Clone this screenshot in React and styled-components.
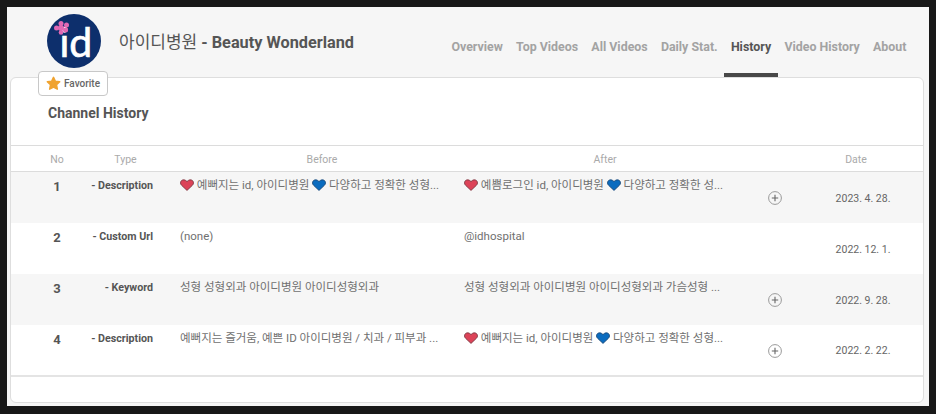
import React from 'react';
import styled, { createGlobalStyle } from 'styled-components';

const GlobalStyle = createGlobalStyle`
  html, body {
    margin: 0;
    height: 100%;
    background: #181818;
    overflow: hidden;
  }
  body {
    font-family: Roboto, "Noto Sans CJK KR", sans-serif;
  }
`;

const COLUMNS = '82px 87px 284px 282px 57px 1fr';

const navItems = ['Overview', 'Top Videos', 'All Videos', 'Daily Stat.', 'History', 'Video History', 'About'];

const rows = [
  {
    no: 1,
    type: '- Description',
    before: [{ heart: 'red' }, ' 예뻐지는 id, 아이디병원 ', { heart: 'blue' }, ' 다양하고 정확한 성형...'],
    after: [{ heart: 'red' }, ' 예쁨로그인 id, 아이디병원 ', { heart: 'blue' }, ' 다양하고 정확한 성...'],
    more: true,
    date: '2023. 4. 28.',
  },
  { no: 2, type: '- Custom Url', before: ['(none)'], after: ['@idhospital'], more: false, date: '2022. 12. 1.' },
  {
    no: 3,
    type: '- Keyword',
    before: ['성형 성형외과 아이디병원 아이디성형외과'],
    after: ['성형 성형외과 아이디병원 아이디성형외과 가슴성형 ...'],
    more: true,
    date: '2022. 9. 28.',
  },
  {
    no: 4,
    type: '- Description',
    before: ['예뻐지는 즐거움, 예쁜 ID 아이디병원 / 치과 / 피부과 ...'],
    after: [{ heart: 'red' }, ' 예뻐지는 id, 아이디병원 ', { heart: 'blue' }, ' 다양하고 정확한 성형...'],
    more: true,
    date: '2022. 2. 22.',
  },
];

const Heart = ({ color }) => (
  <HeartIcon viewBox="0 0 14 12" aria-hidden="true">
    <path
      d="M7 11.4 1.6 6.3C.2 4.9.2 2.9 1.4 1.7 2.8.4 5.2.5 7 2.6 8.8.5 11.2.4 12.6 1.7c1.2 1.2 1.2 3.2-.2 4.6Z"
      fill={color === 'red' ? '#dc4358' : '#0b6cbf'}
      stroke={color === 'red' ? '#7d3a44' : '#1c4a78'}
      strokeWidth="0.9"
    />
  </HeartIcon>
);

const Logo = () => (
  <LogoIcon viewBox="0 0 54 54" role="img" aria-label="id">
    <circle cx="27" cy="27" r="27" fill="#0d2f6c" />
    <text x="12.5" y="43" fontFamily="Lato, sans-serif" fontSize="41" stroke="#fff" strokeWidth="0.7" fill="#fff">
      id
    </text>
    <g fill="#e168b4">
      <circle cx="14" cy="9.5" r="2.5" />
      <circle cx="19.5" cy="11" r="2.5" />
      <circle cx="9.5" cy="14" r="2.5" />
      <circle cx="18.5" cy="16" r="2.5" />
      <circle cx="14" cy="18.5" r="2.3" />
      <circle cx="14" cy="14" r="3" />
    </g>
  </LogoIcon>
);

const Star = () => (
  <StarIcon viewBox="0 0 16 16" aria-hidden="true">
    <path
      d="M8 1.4 10 5.6l4.6.6-3.4 3.2.9 4.6L8 11.8 3.9 14l.9-4.6L1.4 6.2 6 5.6Z"
      fill="#f0a32f"
      stroke="#f0a32f"
      strokeWidth="1.6"
      strokeLinejoin="round"
    />
  </StarIcon>
);

const PlusCircle = () => (
  <PlusIcon viewBox="0 0 14 14" aria-hidden="true">
    <circle cx="7" cy="7" r="6.4" fill="none" stroke="#9a9a9a" strokeWidth="1" />
    <path d="M7 3.8v6.4M3.8 7h6.4" stroke="#666" strokeWidth="1.1" fill="none" />
  </PlusIcon>
);

const RichText = ({ parts }) =>
  parts.map((part, i) =>
    typeof part === 'string' ? <span key={i}>{part}</span> : <Heart key={i} color={part.heart} />
  );

const App = () => {
  return (
    <Page>
      <GlobalStyle />
      <Header>
        <Logo />
        <Title>
          <TitleKo>아이디병원</TitleKo> - Beauty Wonderland
        </Title>
        <Nav>
          {navItems.map((item) => (
            <NavItem key={item} $active={item === 'History'}>
              {item}
            </NavItem>
          ))}
        </Nav>
      </Header>
      <FavoriteButton>
        <Star />
        Favorite
      </FavoriteButton>
      <Card>
        <Heading>Channel History</Heading>
        <HeadRow>
          <HeadCell $pad="0 0 0 10px">No</HeadCell>
          <HeadCell $pad="0 22px 0 0">Type</HeadCell>
          <HeadCell>Before</HeadCell>
          <HeadCell>After</HeadCell>
          <span />
          <HeadCell $pad="0 14px 0 0">Date</HeadCell>
        </HeadRow>
        <Rows>
          {rows.map((row) => (
            <Row key={row.no} $striped={row.no % 2 === 1}>
              <NoCell>{row.no}</NoCell>
              <TypeCell>{row.type}</TypeCell>
              <TextCell>
                <RichText parts={row.before} />
              </TextCell>
              <TextCell>
                <RichText parts={row.after} />
              </TextCell>
              <ActionCell>{row.more && <PlusCircle />}</ActionCell>
              <DateCell>{row.date}</DateCell>
            </Row>
          ))}
        </Rows>
      </Card>
    </Page>
  );
};

const Page = styled.div`
  position: relative;
  display: flex;
  flex-direction: column;
  box-sizing: border-box;
  width: 922px;
  height: 399px;
  margin: 7px 0 0 7px;
  background: #f6f6f6;
`;

const Header = styled.header`
  display: flex;
  align-items: flex-start;
  flex: none;
  height: 70px;
  padding: 0 16px 0 40px;
`;

const LogoIcon = styled.svg`
  flex: none;
  width: 54px;
  height: 54px;
  margin-top: 7px;
`;

const Title = styled.h1`
  margin: 24px 0 0 18px;
  font-size: 16.3px;
  line-height: 22px;
  font-weight: 700;
  color: #555;
  white-space: nowrap;
`;

const TitleKo = styled.span`
  font-weight: 400;
  font-size: 17px;
`;

const Nav = styled.nav`
  display: flex;
  margin-left: auto;
  height: 100%;
`;

const NavItem = styled.div`
  display: flex;
  align-items: center;
  box-sizing: border-box;
  height: 70px;
  padding: 12px 6.6px 0;
  border-bottom: 4px solid ${(p) => (p.$active ? '#484848' : 'transparent')};
  font-size: 12.4px;
  font-weight: 700;
  color: ${(p) => (p.$active ? '#555' : '#a3a3a3')};
  white-space: nowrap;
`;

const FavoriteButton = styled.button`
  position: absolute;
  left: 31px;
  top: 64px;
  z-index: 1;
  display: flex;
  align-items: center;
  gap: 3px;
  box-sizing: border-box;
  width: 70px;
  height: 25px;
  padding: 0 0 0 7px;
  background: #fff;
  border: 1px solid #c8c8c8;
  border-radius: 4px;
  font-family: inherit;
  font-size: 10px;
  font-weight: 500;
  color: #666;
`;

const StarIcon = styled.svg`
  width: 15px;
  height: 15px;
`;

const Card = styled.section`
  flex: 1;
  margin: 0 5px 3px 3px;
  background: #fff;
  border: 1px solid #dedede;
  border-radius: 6px;
`;

const Heading = styled.h2`
  box-sizing: border-box;
  height: 67px;
  margin: 0;
  padding: 25px 0 0 37px;
  font-size: 14px;
  line-height: 21px;
  font-weight: 700;
  color: #555;
`;

const HeadRow = styled.div`
  display: grid;
  grid-template-columns: ${COLUMNS};
  align-items: center;
  height: 27px;
  box-sizing: border-box;
  padding-top: 2px;
  border-top: 1px solid #dcdcdc;
  border-bottom: 1px solid #dcdcdc;
`;

const HeadCell = styled.div`
  padding: ${(p) => p.$pad || '0'};
  text-align: center;
  font-size: 10.5px;
  color: #aaa;
`;

const Rows = styled.div`
  border-bottom: 2px solid #e4e4e4;
`;

const Row = styled.div`
  display: grid;
  grid-template-columns: ${COLUMNS};
  height: 51px;
  background: ${(p) => (p.$striped ? '#f6f6f6' : '#fff')};

  &:last-child {
    height: 50px;
  }
`;

const NoCell = styled.div`
  padding: 7px 0 0 10px;
  text-align: center;
  font-size: 13px;
  line-height: 16px;
  font-weight: 700;
  color: #555;
`;

const TypeCell = styled.div`
  display: flex;
  justify-content: flex-end;
  padding: 7px 27px 0 0;
  font-size: 10.7px;
  line-height: 14px;
  font-weight: 700;
  color: #555;
  white-space: nowrap;
`;

const TextCell = styled.div`
  padding-top: 6px;
  font-size: 11.5px;
  line-height: 14px;
  color: #707070;
  white-space: nowrap;
`;

const HeartIcon = styled.svg`
  display: inline-block;
  width: 14px;
  height: 12px;
  vertical-align: -2px;
`;

const ActionCell = styled.div`
  display: flex;
  align-items: center;
  justify-content: center;
`;

const PlusIcon = styled.svg`
  width: 14px;
  height: 14px;
  margin-top: 1px;
`;

const DateCell = styled.div`
  align-self: center;
  padding-top: 1px;
  text-align: center;
  font-size: 10.5px;
  color: #666;
`;

export default App;
